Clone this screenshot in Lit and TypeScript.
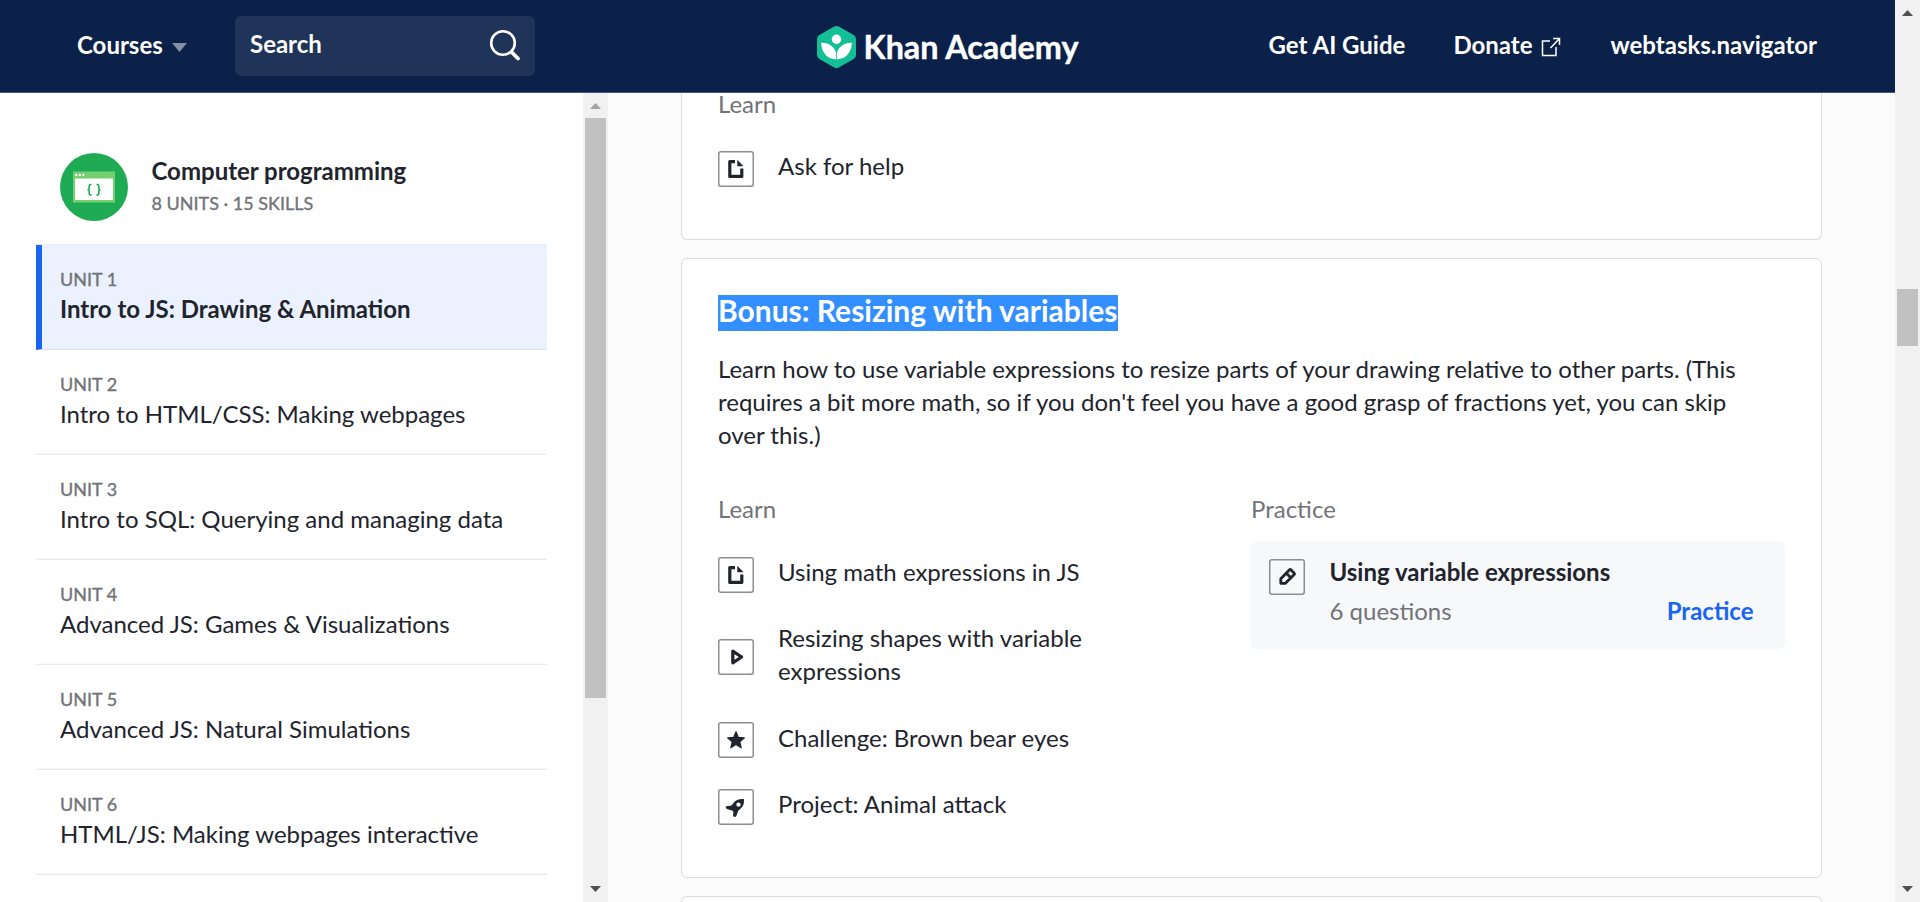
import { LitElement, html, css, svg } from "lit";
import { customElement, property } from "lit/decorators.js";

const glyphs: Record<string, unknown> = {
  article: svg`<path d="M17 10.600h-5.200v14.800h12v-8" fill="none" stroke="#21242c" stroke-width="3.200" stroke-linejoin="round"/><path d="M19.300 8.800v6.400h6.200z" fill="#21242c"/>`,
  video: svg`<path d="M14.8 12.2v11.6l8.8-5.8z" fill="none" stroke="#21242c" stroke-width="3.2" stroke-linejoin="round"/>`,
  star: svg`<path d="M18 9.8l2.4 5.6 6 .5-4.600 4 1.400 5.900-5.200-3.200-5.200 3.200 1.400-5.900-4.600-4 6-.5z" fill="#21242c" stroke="#21242c" stroke-width="1.200" stroke-linejoin="round"/>`,
  rocket: svg`<path fill-rule="evenodd" d="M25.900 10.100c-5-.4-7.900.8-10.200 3.600-.9 1.100-1.800 2.600-2.800 3l-3.600.3c-1.700.2-2.100 2.300-.3 2.900l4.800 1.500c1 .3 1.400.8 1.500 1.500l-.2 3.600c.2 1.700 2.500 1.900 3.200.5l1.800-4.700c.4-1 1.300-1.600 2.300-2.500 3-2.500 3.900-5.200 3.500-9.700zM20.500 13.400a2.200 2.200 0 1 1 0 4.400 2.200 2.200 0 0 1 0-4.400z" fill="#21242c"/>`,
  pencil: svg`<path d="M11.800 24.300v-4.500l8.500-8.800q.9-.9 1.800 0l2.900 2.900q.9.900 0 1.800l-8.600 8.600zM17.300 14.300l4.300 4.300" fill="none" stroke="#21242c" stroke-width="2.800" stroke-linejoin="round"/>`,
};

@customElement("kind-icon")
class KindIcon extends LitElement {
  @property() kind = "article";
  static styles = css`
    :host { display: block; width: 36px; height: 36px; flex: none; }
    svg { display: block; }
  `;
  render() {
    return html`<svg width="36" height="36" viewBox="0 0 36 36">
      <rect x=".75" y=".75" width="34.500" height="34.500" rx="2.200" fill="none" stroke="#8c8d92" stroke-width="1.500"/>
      ${glyphs[this.kind]}
    </svg>`;
  }
}

@customElement("scroll-track")
class ScrollTrack extends LitElement {
  @property({ type: Number }) start = 0;
  @property({ type: Number }) size = 0;
  @property() up = "#505050";
  static styles = css`
    :host { display: flex; flex-direction: column; width: 25px; flex: none; background: #f1f1f1; align-items: center; }
    svg { display: block; flex: none; }
    .lead { flex: none; }
    .thumb { width: 21px; background: #c1c1c1; flex: none; }
    .rest { flex: 1; }
  `;
  render() {
    return html`
      <svg width="25" height="25"><path d="M7 16h11l-5.500-6z" fill=${this.up}/></svg>
      <div class="lead" style="height:${this.start}px"></div>
      <div class="thumb" style="height:${this.size}px"></div>
      <div class="rest"></div>
      <svg width="25" height="25"><path d="M7 9h11l-5.500 6z" fill="#505050"/></svg>`;
  }
}

const units = [
  "Intro to JS: Drawing & Animation",
  "Intro to HTML/CSS: Making webpages",
  "Intro to SQL: Querying and managing data",
  "Advanced JS: Games & Visualizations",
  "Advanced JS: Natural Simulations",
  "HTML/JS: Making webpages interactive",
];

const lessons = [
  ["article", "Using math expressions in JS"],
  ["video", "Resizing shapes with variable expressions"],
  ["star", "Challenge: Brown bear eyes"],
  ["rocket", "Project: Animal attack"],
];

@customElement("app-root")
class AppRoot extends LitElement {
  static styles = css`
    :host { display: flex; width: 1920px; height: 902px; overflow: hidden; background: #fff; color: #21242c; font: 24px/33px Lato, sans-serif; }
    * { box-sizing: border-box; }
    .page { flex: 1; display: flex; flex-direction: column; min-width: 0; }
    .top { height: 93px; flex: none; background: #0b2149; border-bottom: 1px solid #475878; color: #fff; font-weight: 700; display: grid; grid-template-columns: 817px 1fr auto; padding-right: 78px; }
    .left, .right, .brand { display: flex; align-items: center; height: 92px; white-space: nowrap; }
    .left { padding-left: 77px; }
    .courses { width: 95px; }
    .courses, .search span, .right > span { padding-bottom: 3px; }
    .caret { width: 63px; display: block; }
    .search { width: 300px; height: 60px; border-radius: 6px; background: #203358; display: flex; align-items: center; justify-content: space-between; padding: 0 14px 2px 15px; }
    .brand svg { display: block; }
    .right svg { margin: 5px 0 0 9px; }
    .donate { display: flex; align-items: center; margin: 0 49px 0 48px; }
    .body { flex: 1; display: flex; min-height: 0; }
    .side { width: 583px; padding: 60px 36px 0; background: #fff; overflow: hidden; }
    .course { display: flex; height: 92px; padding-left: 24px; border-bottom: 1px solid #efeff0; }
    .course svg { flex: none; margin-right: 23.500px; }
    .name { font-weight: 700; line-height: 30px; margin-top: 3px; }
    .small { font-size: 18px; line-height: 24px; color: #717378; -webkit-text-stroke: .35px #717378; }
    .name + .small { margin-top: 5px; }
    .unit { height: 105px; padding: 22px 0 0 24px; border-bottom: 1px solid #e9e9ea; box-shadow: inset 0 -1px #f8f8f8; white-space: nowrap; }
    .unit .small { height: 25px; }
    .unit.on { background: #ebf1fe; border-left: 6px solid #1865f2; padding-left: 18px; font-weight: 700; border-bottom-color: #d9dfeb; box-shadow: none; }
    .unit.on .small { font-weight: 400; }
    .main { flex: 1; background: #fbfbfb; padding: 0 73px; overflow: hidden; }
    .card { background: #fff; border: 1px solid #dcdcdd; border-radius: 6px; padding: 0 36px; margin-bottom: 18px; }
    .prev { height: 147px; border-top: 0; border-radius: 0 0 6px 6px; }
    .now { height: 620px; padding-top: 36px; }
    .next { height: 60px; }
    .cap { color: #717378; }
    .prev .cap { line-height: 22px; }
    h2 { font-size: 30px; line-height: 31px; margin: 0 0 21px; font-weight: 700; height: 36px; display: flex; }
    h2 span { background: #338fff; color: #fff; height: 36px; }
    p { margin: 0 0 41px; padding-right: 40px; }
    .cols { display: grid; grid-template-columns: 533px 534px; }
    .row { display: flex; align-items: center; gap: 24px; margin-bottom: 33.350px; }
    .row kind-icon { margin: -1.500px 0 -7.500px; }
    .learn .cap { margin-bottom: 30px; }
    .learn .row span { width: 340px; }
    .prev .row { margin-top: 34px; }
    .task { height: 108px; background: #f7f8fa; border-radius: 6px; display: flex; padding: 14px 31.500px 0 18px; margin-top: 16px; gap: 24.500px; }
    .task kind-icon { margin-top: 4px; }
    .info { flex: 1; }
    .strong { font-weight: 700; }
    .foot { display: flex; justify-content: space-between; margin-top: 6px; color: #717378; }
    .go { color: #1865f2; font-weight: 700; }
  `;
  render() {
    return html`
      <div class="page">
        <header class="top">
          <div class="left">
            <span class="courses">Courses</span>
            <svg class="caret" width="63" height="12"><path d="M0 3h15l-7.500 9z" fill="#858fa4"/></svg>
            <div class="search"><span>Search</span>
              <svg width="32" height="32" viewBox="0 0 32 32" fill="none" stroke="#fff"><circle cx="14" cy="14" r="11.800" stroke-width="2.600"/><path d="M22.500 23l6.500 6.500" stroke-width="3.800" stroke-linecap="round"/></svg>
            </div>
          </div>
          <div class="brand">
            <svg width="270" height="60" viewBox="0 0 270 60">
              <path d="M17.300 10.600q2.200-1.200 4.400 0l15 8.500q2.300 1.300 2.300 4v16q0 2.700-2.300 4l-15 8.500q-2.200 1.200-4.400 0l-15-8.500Q0 41.800 0 39.100v-16q0-2.700 2.300-4z" fill="#14bf96"/>
              <circle cx="19.500" cy="23.200" r="4.700" fill="#fff"/>
              <path d="M4.200 26.800c7.600-.3 13.900 4.300 15.300 11.500 1.400-7.200 7.700-11.800 15.300-11.500 0 9.200-6.200 16.400-14.200 16.400h-2.200C10.400 43.200 4.200 36 4.200 26.800z" fill="#fff"/>
              <path d="M19.500 36v7.500" stroke="#14bf96" stroke-width=".8"/>
              <text x="46.500" y="43" font-size="33" font-weight="700" fill="#fff" stroke="#fff" stroke-width=".4" textLength="215" lengthAdjust="spacingAndGlyphs">Khan Academy</text>
            </svg>
          </div>
          <div class="right">
            <span>Get AI Guide</span>
            <span class="donate">Donate<svg width="20" height="20" viewBox="0 0 20 20" fill="none" stroke="#fff" stroke-width="1.500"><path d="M9 4H1.500v14.500h13.500V10M12 1.500h6.500v6.500M18.300 1.700L9.500 11"/></svg></span>
            <span>webtasks.navigator</span>
          </div>
        </header>
        <div class="body">
          <nav class="side">
            <div class="course">
              <svg width="68" height="68" viewBox="0 0 68 68"><circle cx="34" cy="34" r="34" fill="#1fab54"/><path d="M13 18.500h42v31H13z" fill="#74cf70"/><path d="M15 25.500h38v21.500H15z" fill="#fff"/><g fill="#fff"><circle cx="16.200" cy="22" r="1.200"/><circle cx="19.800" cy="22" r="1.200"/><circle cx="23.400" cy="22" r="1.200"/></g><path d="M31.500 31.500h-.8q-1.500 0-1.500 1.500v1.800q0 2-1.700 2 1.700 0 1.700 2v1.800q0 1.500 1.500 1.500h.8M36.500 31.500h.8q1.500 0 1.500 1.500v1.800q0 2 1.700 2-1.700 0-1.700 2v1.800q0 1.500-1.500 1.500h-.8" fill="none" stroke="#1fab54" stroke-width="1.600"/></svg>
              <div><div class="name">Computer programming</div><div class="small">8 UNITS · 15 SKILLS</div></div>
            </div>
            ${units.map((u, i) => html`<div class="unit ${i === 0 ? "on" : ""}"><div class="small">UNIT ${i + 1}</div><div>${u}</div></div>`)}
          </nav>
          <scroll-track start="0" size="580" up="#a3a3a3"></scroll-track>
          <main class="main">
            <section class="card prev">
              <div class="cap">Learn</div>
              <div class="row"><kind-icon kind="article"></kind-icon><span>Ask for help</span></div>
            </section>
            <section class="card now">
              <h2><span>Bonus: Resizing with variables</span></h2>
              <p>Learn how to use variable expressions to resize parts of your drawing relative to other parts. (This requires a bit more math, so if you don't feel you have a good grasp of fractions yet, you can skip over this.)</p>
              <div class="cols">
                <div class="learn"><div class="cap">Learn</div>
                  ${lessons.map(([k, t]) => html`<div class="row"><kind-icon kind=${k}></kind-icon><span>${t}</span></div>`)}
                </div>
                <div><div class="cap">Practice</div>
                  <div class="task"><kind-icon kind="pencil"></kind-icon>
                    <div class="info"><div class="strong">Using variable expressions</div><div class="foot"><span>6 questions</span><span class="go">Practice</span></div></div>
                  </div>
                </div>
              </div>
            </section>
            <section class="card next"></section>
          </main>
        </div>
      </div>
      <scroll-track start="264" size="57"></scroll-track>`;
  }
}
